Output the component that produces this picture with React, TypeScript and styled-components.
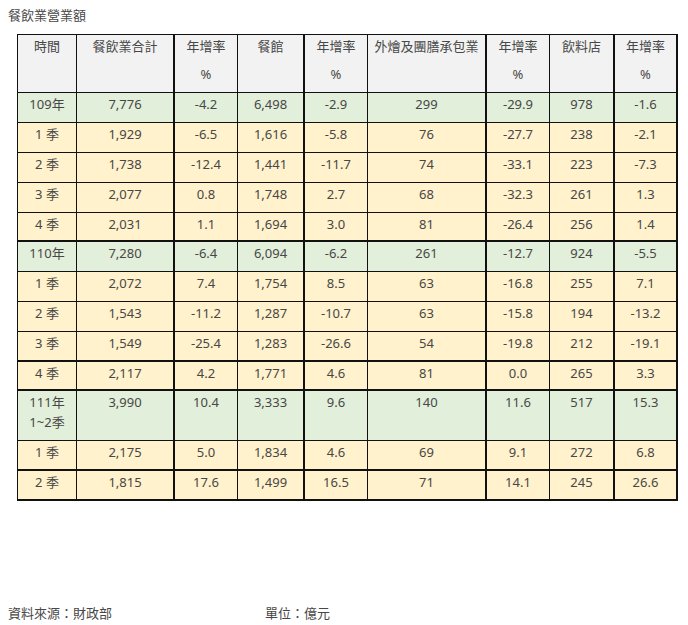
import React from "react";
import styled, { createGlobalStyle } from "styled-components";

const Global = createGlobalStyle`
  body {
    margin: 8px;
    background: #ffffff;
    font-family: "Noto Sans", "Noto Sans CJK TC", sans-serif;
    color: #474747;
  }
`;

const Page = styled.div`
  display: flex;
  flex-direction: column;
  width: 672px;
`;

const Title = styled.div`
  font-size: 13px;
  line-height: 13px;
  height: 13px;
  margin-top: 1px;
`;

const Table = styled.table`
  margin: 12px 0 0 9px;
  border-collapse: separate;
  border-spacing: 0;
  table-layout: fixed;
  width: 661px;
  border-top: 1px solid #111;
  border-left: 1px solid #111;
  font-size: 13px;
`;

type CellProps = { $bg: string; $thickRight?: boolean; $thickBottom?: boolean; $h: number };

const Cell = styled.td<CellProps>`
  box-sizing: border-box;
  height: ${(p) => p.$h}px;
  background: ${(p) => p.$bg};
  border-right: ${(p) => (p.$thickRight ? 2 : 1)}px solid #111;
  border-bottom: ${(p) => (p.$thickBottom ? 2 : 1)}px solid #111;
  padding: 1px 2px 0;
  vertical-align: top;
  text-align: center;
  line-height: 20px;
  white-space: nowrap;
`;

const HeadCell = styled(Cell).attrs({ as: "th" })`
  font-weight: 400;
`;

const Unit = styled.span`
  display: block;
  margin-top: 8px;
`;

const Footer = styled.div`
  display: flex;
  margin-top: 104px;
  font-size: 13px;
  line-height: 16px;
`;

const Source = styled.span`
  width: 257px;
`;

const HEAD_BG = "#f2f2f2";
const GREEN = "#e2efda";
const YELLOW = "#fff2cc";

const widths = [59, 98, 63, 67, 63, 119, 63, 65, 63];
const thickCols = [false, true, false, true, false, true, false, true, true];

const headers: [string, boolean][] = [
  ["時間", false],
  ["餐飲業合計", false],
  ["年增率", true],
  ["餐館", false],
  ["年增率", true],
  ["外燴及團膳承包業", false],
  ["年增率", true],
  ["飲料店", false],
  ["年增率", true],
];

type Row = { cells: React.ReactNode[]; green?: boolean; thick?: boolean; h?: number };

const rows: Row[] = [
  { cells: ["109年", "7,776", "-4.2", "6,498", "-2.9", "299", "-29.9", "978", "-1.6"], green: true },
  { cells: ["1 季", "1,929", "-6.5", "1,616", "-5.8", "76", "-27.7", "238", "-2.1"] },
  { cells: ["2 季", "1,738", "-12.4", "1,441", "-11.7", "74", "-33.1", "223", "-7.3"] },
  { cells: ["3 季", "2,077", "0.8", "1,748", "2.7", "68", "-32.3", "261", "1.3"] },
  { cells: ["4 季", "2,031", "1.1", "1,694", "3.0", "81", "-26.4", "256", "1.4"], thick: true, h: 29 },
  { cells: ["110年", "7,280", "-6.4", "6,094", "-6.2", "261", "-12.7", "924", "-5.5"], green: true },
  { cells: ["1 季", "2,072", "7.4", "1,754", "8.5", "63", "-16.8", "255", "7.1"] },
  { cells: ["2 季", "1,543", "-11.2", "1,287", "-10.7", "63", "-15.8", "194", "-13.2"] },
  { cells: ["3 季", "1,549", "-25.4", "1,283", "-26.6", "54", "-19.8", "212", "-19.1"], thick: true },
  { cells: ["4 季", "2,117", "4.2", "1,771", "4.6", "81", "0.0", "265", "3.3"], thick: true, h: 29 },
  {
    cells: [
      <>
        111年
        <br />
        1~2季
      </>,
      "3,990",
      "10.4",
      "3,333",
      "9.6",
      "140",
      "11.6",
      "517",
      "15.3",
    ],
    green: true,
    h: 50,
  },
  { cells: ["1 季", "2,175", "5.0", "1,834", "4.6", "69", "9.1", "272", "6.8"], thick: true },
  { cells: ["2 季", "1,815", "17.6", "1,499", "16.5", "71", "14.1", "245", "26.6"], thick: true },
];

export default function App() {
  return (
    <>
      <Global />
      <Page>
        <Title>餐飲業營業額</Title>
        <Table>
          <colgroup>
            {widths.map((w, i) => (
              <col key={i} style={{ width: w }} />
            ))}
          </colgroup>
          <thead>
            <tr>
              {headers.map(([label, pct], i) => (
                <HeadCell key={i} $bg={HEAD_BG} $h={58} $thickRight={thickCols[i]}>
                  {label}
                  {pct && <Unit>%</Unit>}
                </HeadCell>
              ))}
            </tr>
          </thead>
          <tbody>
            {rows.map((r, ri) => (
              <tr key={ri}>
                {r.cells.map((c, ci) => (
                  <Cell
                    key={ci}
                    $bg={r.green ? GREEN : YELLOW}
                    $h={r.h ?? 30}
                    $thickRight={thickCols[ci]}
                    $thickBottom={r.thick}
                  >
                    {c}
                  </Cell>
                ))}
              </tr>
            ))}
          </tbody>
        </Table>
        <Footer>
          <Source>資料來源：財政部</Source>
          <span>單位：億元</span>
        </Footer>
      </Page>
    </>
  );
}
